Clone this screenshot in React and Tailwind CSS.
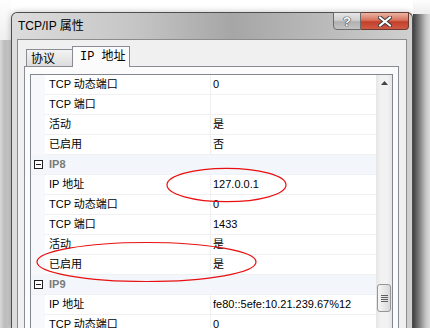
import React from 'react';

const rows = [
  { n: 'TCP 动态端口', v: '0' },
  { n: 'TCP 端口', v: '' },
  { n: '活动', v: '是' },
  { n: '已启用', v: '否' },
  { cat: 'IP8' },
  { n: 'IP 地址', v: '127.0.0.1' },
  { n: 'TCP 动态端口', v: '0' },
  { n: 'TCP 端口', v: '1433' },
  { n: '活动', v: '是' },
  { n: '已启用', v: '是' },
  { cat: 'IP9' },
  { n: 'IP 地址', v: 'fe80::5efe:10.21.239.67%12' },
  { n: 'TCP 动态端口', v: '0' },
];

function Row({ row }) {
  if (row.cat) {
    return (
      <div className="flex h-[20px] bg-[#f3f6fb] border-b border-[#eef1f6]">
        <div className="w-[14px] pl-[3px] flex items-center">
          <div className="w-[9px] h-[9px] border border-[#202020] bg-white flex items-center justify-center">
            <div className="w-[5px] h-px bg-[#202020]" />
          </div>
        </div>
        <div className="flex-1 pl-[4px] flex items-center font-bold text-[#7a7a7a]">{row.cat}</div>
      </div>
    );
  }
  return (
    <div className="flex h-[20px]">
      <div className="w-[14px] bg-[#f6f8fc]" />
      <div className="w-[165px] pl-[4px] flex items-center border-b border-[#f0f0f0] text-[#000]">{row.n}</div>
      <div className="w-px bg-[#f0f0f0]" />
      <div className="flex-1 pl-[2px] flex items-center border-b border-[#f0f0f0] text-[#000]">{row.v}</div>
    </div>
  );
}

function Scrollbar() {
  return (
    <div className="w-[16px] flex flex-col bg-[linear-gradient(90deg,#e6e6e6,#f2f2f2_30%,#f2f2f2_70%,#e6e6e6)]">
      <div className="h-[16px] flex items-center justify-center">
        <svg width="7" height="4" viewBox="0 0 7 4">
          <path d="M0 4 L3.5 0 L7 4 Z" fill="#444" />
        </svg>
      </div>
      <div className="h-[193px]" />
      <div className="mx-px h-[28px] rounded-[3px] border border-[#959595] bg-[linear-gradient(90deg,#f5f5f5,#e8e8e8_50%,#d8d8d8)] flex flex-col items-center justify-center gap-px">
        <div className="w-[7px] h-px bg-[#606060]" />
        <div className="w-[7px] h-px bg-[#606060]" />
        <div className="w-[7px] h-px bg-[#606060]" />
        <div className="w-[7px] h-px bg-[#606060]" />
      </div>
    </div>
  );
}

export default function App() {
  return (
    <div className="relative w-[430px] h-[328px] overflow-hidden bg-white flex font-['Liberation_Sans','Noto_Sans_CJK_SC',sans-serif] text-[11px]">
      {/* left backdrop */}
      <div className="w-[11px] flex flex-col">
        <div className="h-[40px] bg-[linear-gradient(180deg,#fdfdfd,#f0f0f0)]" />
        <div className="flex-1 bg-[linear-gradient(90deg,#d8d8d8,#bdbdbd_40%,#cfcfcf)]" />
      </div>

      {/* window */}
      <div className="w-[402px] mt-[12px] flex flex-col border border-b-0 border-[#4e4e4e] rounded-t-[6px] bg-[linear-gradient(90deg,#dcdcdc_0%,#c6c6c6_30%,#a6a6a6_55%,#bababa_78%,#d0d0d0_100%)] shadow-[0_0_6px_rgba(0,0,0,0.25)]">
        <div className="h-[27px] flex items-start pl-[6px] pr-[3px]">
          <div className="flex-1 h-[26px] flex items-center text-[12px] text-black">TCP/IP 属性</div>
          <div className="flex -mt-px">
            <div className="w-[28px] h-[18px] rounded-bl-[4px] border border-[#6b6b6b] bg-[linear-gradient(180deg,#e6e6e6,#cfcfcf_45%,#b0b0b0_55%,#c4c4c4)] flex items-center justify-center">
              <span className="text-[13px] font-bold leading-none text-white [text-shadow:0_0_1px_#333,0_0_1px_#333,0_0_1px_#333]">?</span>
            </div>
            <div className="w-[48px] h-[18px] rounded-br-[4px] border border-l-0 border-[#6b3a30] bg-[linear-gradient(180deg,#eab3a4,#d8735c_45%,#c2402b_55%,#d05a44)] flex items-center justify-center">
              <svg width="14" height="11" viewBox="0 0 14 11">
                <path d="M2 1.5 L12 9.5 M12 1.5 L2 9.5" stroke="#3a3a3a" strokeWidth="4" strokeLinecap="square" />
                <path d="M2 1.5 L12 9.5 M12 1.5 L2 9.5" stroke="#ffffff" strokeWidth="2" strokeLinecap="square" />
              </svg>
            </div>
          </div>
        </div>

        <div className="flex-1 flex px-[5px]">
          <div className="flex-1 flex flex-col border border-b-0 border-[#8c8c8c] bg-[#f0f0f0] pt-[6px] pl-[6px] pr-[7px]">
            {/* tabs */}
            <div className="h-[20px] flex items-end pl-[2px] relative z-10">
              <div className="w-[46px] h-[17px] border border-r-0 border-b-0 border-[#898c95] bg-[linear-gradient(180deg,#f3f3f3,#e8e8e8_50%,#dcdcdc)] flex items-center pl-[4px] text-[12px] text-black font-['Noto_Sans_CJK_SC',sans-serif]">
                协议
              </div>
              <div className="w-[58px] h-[21px] -mb-px border border-b-0 border-[#898c95] bg-[#fbfbfb] flex items-center pl-[7px] text-[12px] text-black font-['Liberation_Mono','Noto_Sans_CJK_SC',monospace]">
                IP 地址
              </div>
            </div>
            {/* tab panel */}
            <div className="flex-1 border border-b-0 border-[#898c95] bg-[#fbfbfb] pt-[7px] px-[5px] flex flex-col">
              <div className="flex-1 flex border border-b-0 border-[#828790] bg-white">
                <div className="flex-1 flex flex-col">
                  {rows.map((r, i) => (
                    <Row key={i} row={r} />
                  ))}
                </div>
                <Scrollbar />
              </div>
            </div>
          </div>
        </div>
      </div>

      {/* right backdrop */}
      <div className="flex-1 flex flex-col">
        <div className="h-[14px] bg-[linear-gradient(180deg,#fdfdfd,#ededed)]" />
        <div className="flex-1 bg-[linear-gradient(90deg,#3f3f3f,#7a7a7a_35%,#c4c4c4_75%,#dcdcdc)]" />
      </div>

      {/* red annotations */}
      <svg className="absolute left-0 top-0 pointer-events-none" width="430" height="328">
        <ellipse cx="226.5" cy="185" rx="59.5" ry="16.7" fill="none" stroke="#e81010" strokeWidth="1.2" />
        <ellipse cx="146.5" cy="262" rx="109.5" ry="19.5" fill="none" stroke="#e81010" strokeWidth="1.2" />
      </svg>
    </div>
  );
}
